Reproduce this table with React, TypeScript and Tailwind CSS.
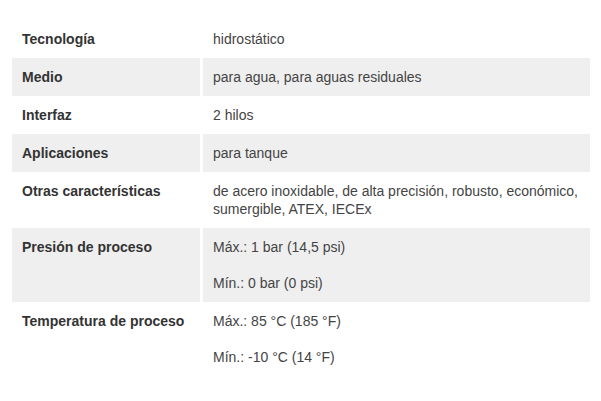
const rows: { label: string; values: string[] }[] = [
  { label: "Tecnología", values: ["hidrostático"] },
  { label: "Medio", values: ["para agua, para aguas residuales"] },
  { label: "Interfaz", values: ["2 hilos"] },
  { label: "Aplicaciones", values: ["para tanque"] },
  {
    label: "Otras características",
    values: ["de acero inoxidable, de alta precisión, robusto, económico, sumergible, ATEX, IECEx"],
  },
  { label: "Presión de proceso", values: ["Máx.: 1 bar (14,5 psi)", "Mín.: 0 bar (0 psi)"] },
  { label: "Temperatura de proceso", values: ["Máx.: 85 °C (185 °F)", "Mín.: -10 °C (14 °F)"] },
];

export default function App() {
  return (
    <div className="w-[601px] h-[401px] bg-white pl-3 pt-5 font-['Liberation_Sans',Arial,sans-serif] text-[14px] leading-[18px]">
      <div className="grid grid-cols-[188px_387px] gap-x-[3px]">
        {rows.map((row, i) => (
          <div key={row.label} className="contents">
            <div className={`px-[10px] py-[10px] font-bold text-[#333333] ${i % 2 === 1 ? "bg-[#efefef]" : ""}`}>
              {row.label}
            </div>
            <div className={`px-[10px] py-[10px] text-[#444444] ${i % 2 === 1 ? "bg-[#efefef]" : ""}`}>
              {row.values.map((v, j) => (
                <p key={j} className={j < row.values.length - 1 ? "mb-[18px]" : ""}>
                  {v}
                </p>
              ))}
            </div>
          </div>
        ))}
      </div>
    </div>
  );
}
